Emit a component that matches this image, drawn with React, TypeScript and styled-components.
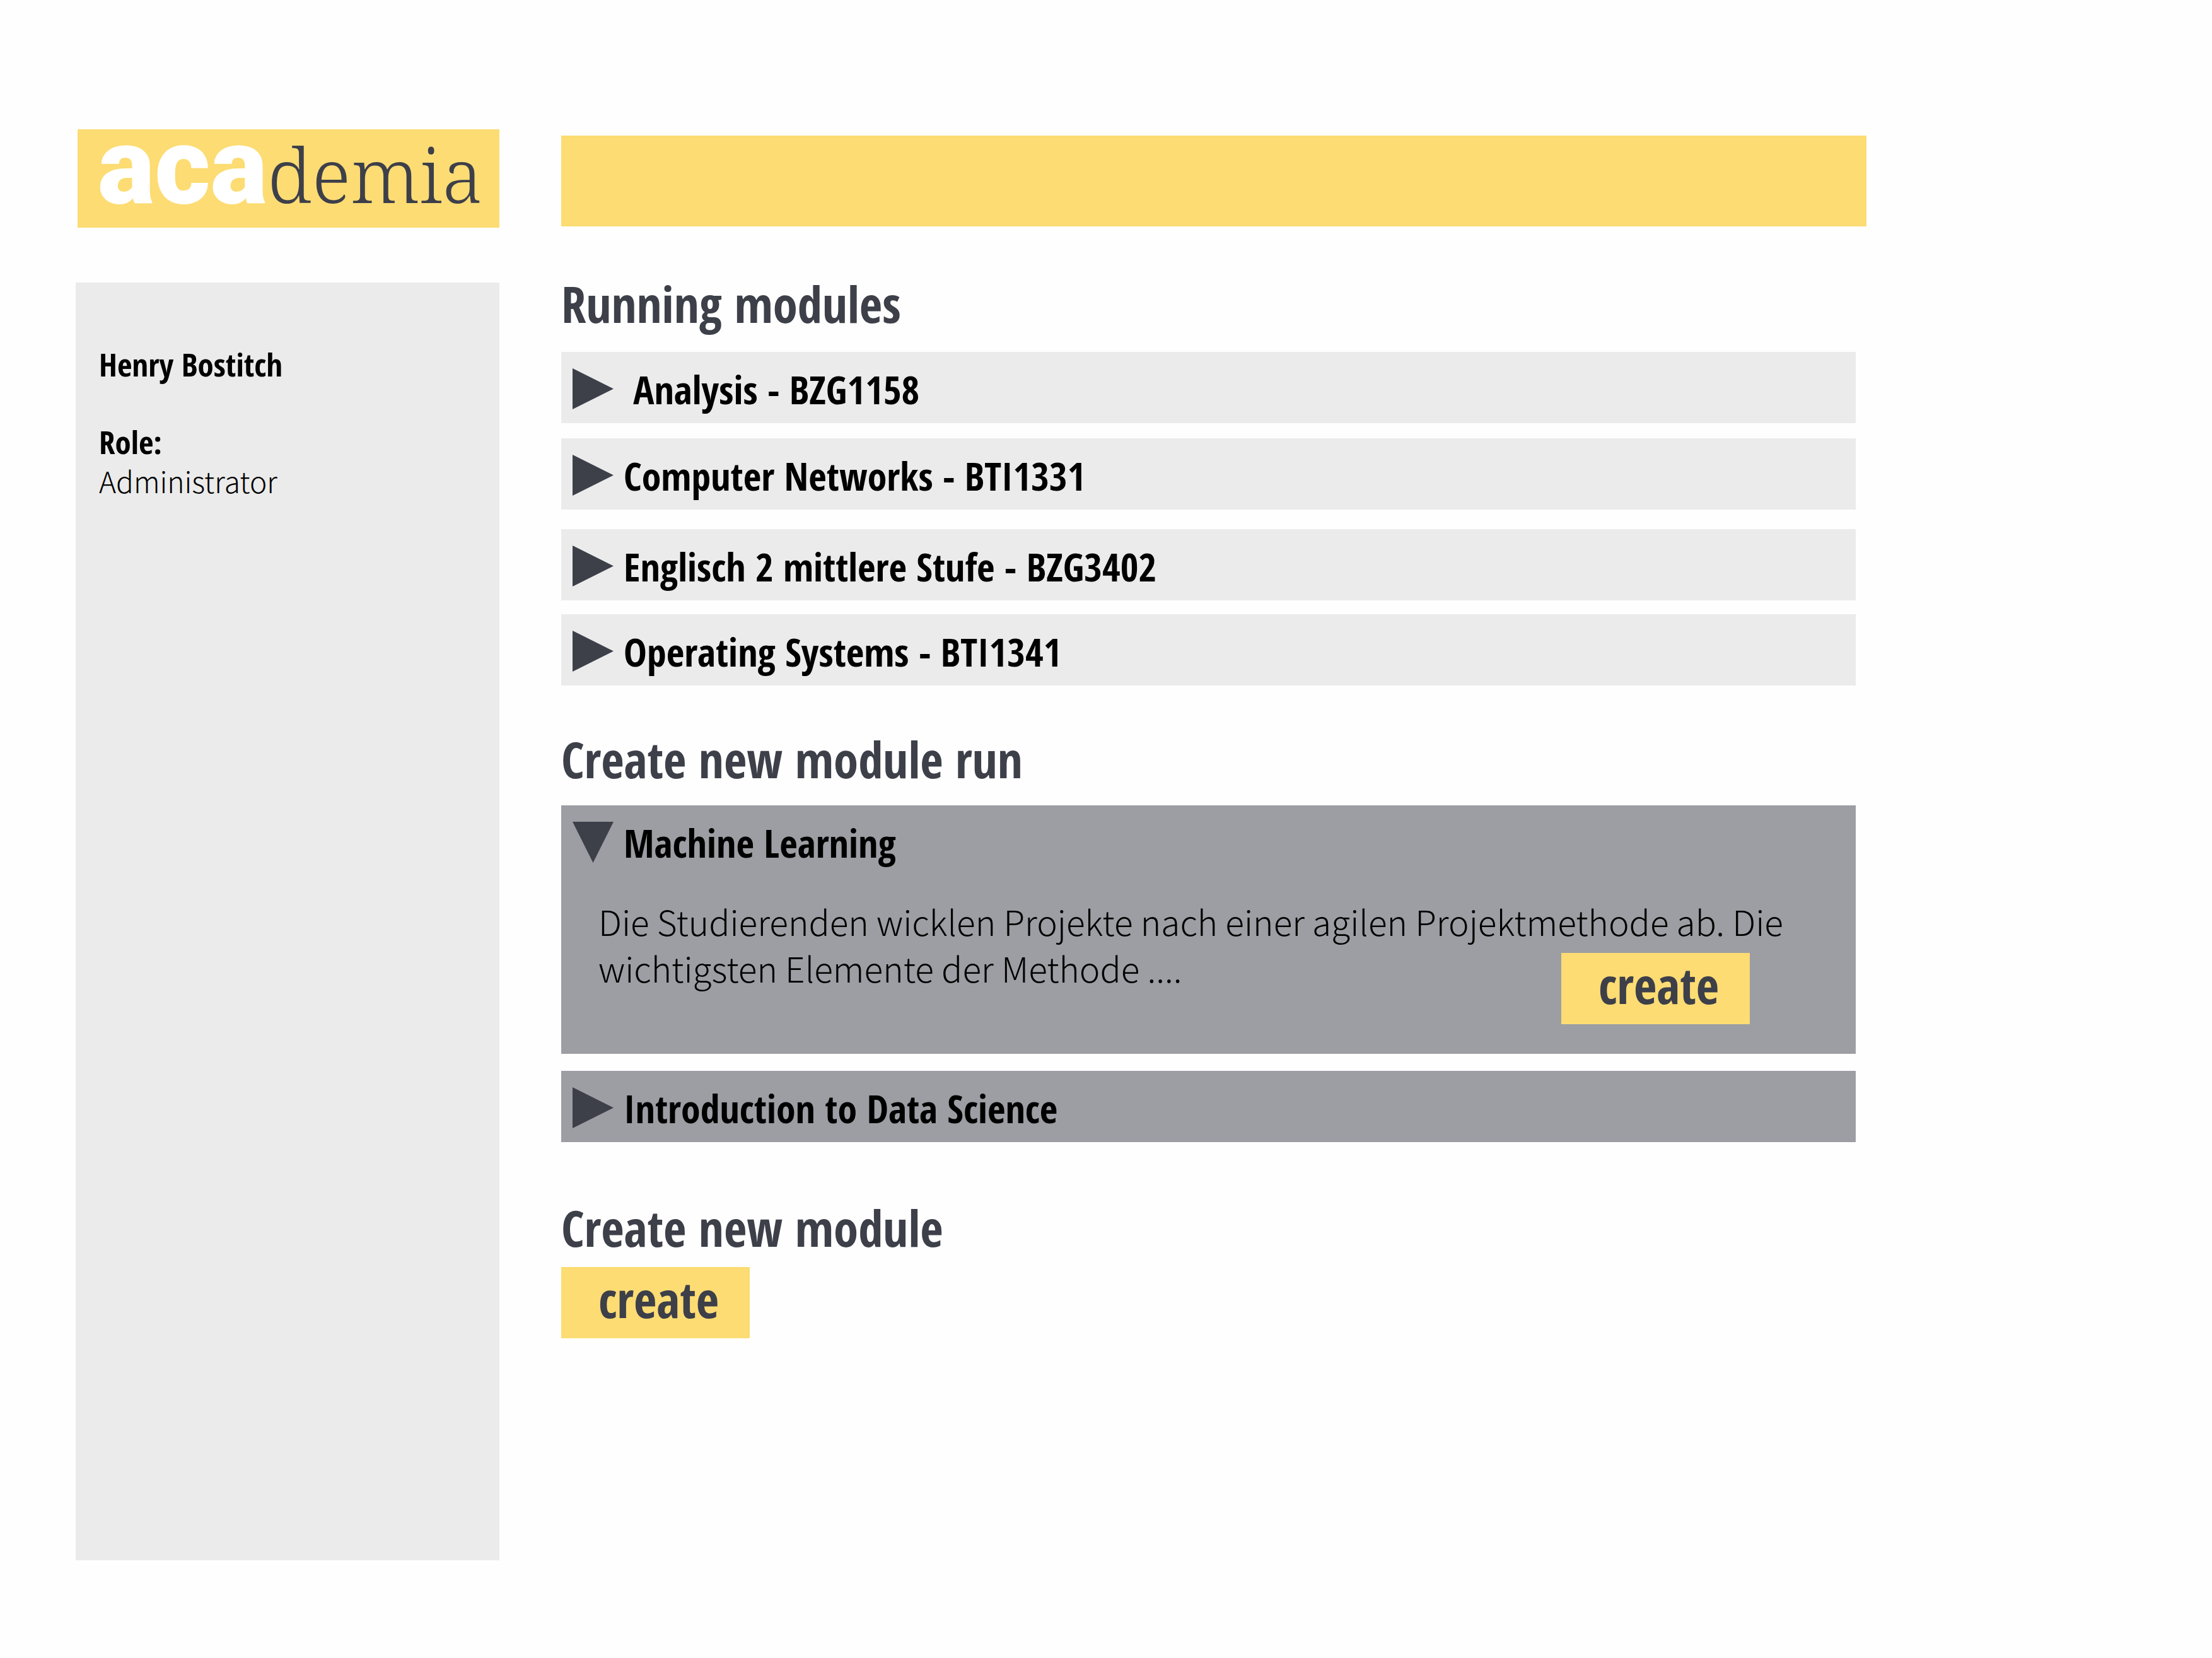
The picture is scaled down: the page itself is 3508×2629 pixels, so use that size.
import React, { useState } from "react";
import styled, { createGlobalStyle } from "styled-components";

const color = {
  yellow: "#fcdc73",
  ink: "#3d3f49",
  light: "#ebebeb",
  dark: "#9d9ea3",
};

const condensed = `"Open Sans Condensed", "Open Sans", sans-serif`;
const thin = `"Noto Sans CJK JP", "Open Sans", sans-serif`;

const GlobalStyle = createGlobalStyle`
  *, *::before, *::after { box-sizing: border-box; }
  body { margin: 0; background: #fefefe; color: #000; font-family: ${condensed}; }
  h1, h2, p, ul, dl, dt, dd { margin: 0; padding: 0; }
  button { border: 0; border-radius: 0; margin: 0; color: inherit; cursor: pointer; }
`;

const Page = styled.div`
  display: grid;
  grid-template-columns: 672px minmax(0, 1fr);
  grid-template-rows: auto 1fr;
  column-gap: 98px;
  row-gap: 87px;
  max-width: 2960px;
  min-height: 100vh;
  padding: 205px 0 155px 120px;
`;

const Logo = styled.h1`
  display: flex;
  align-items: baseline;
  height: 156px;
  margin-left: 3px;
  padding-left: 32px;
  background: ${color.yellow};
  line-height: 118px;
  white-space: nowrap;
`;

const LogoStrong = styled.span`
  color: #fff;
  font-family: Roboto, sans-serif;
  font-size: 170px;
  font-weight: 900;
`;

const LogoLight = styled.span`
  color: ${color.ink};
  font-family: "Noto Serif", "DejaVu Serif", serif;
  font-size: 119px;
  font-weight: 300;
`;

const TopBar = styled.header`
  margin: 10px 0 2px;
  background: ${color.yellow};
`;

const Sidebar = styled.aside`
  padding: 98px 37px;
  background: ${color.light};
  font-size: 51px;
  line-height: 62px;
`;

const UserName = styled.p`
  margin-bottom: 61px;
  font-weight: 700;
`;

const RoleLabel = styled.dt`
  font-weight: 700;
`;

const RoleValue = styled.dd`
  font-family: ${thin};
  font-size: 46px;
  font-weight: 300;
`;

const Main = styled.main`
  padding-right: 17px;
`;

const Section = styled.section<{ $before?: number }>`
  margin-top: ${(p) => p.$before ?? 0}px;
`;

const Heading = styled.h2<{ $after: number }>`
  margin-bottom: ${(p) => p.$after}px;
  color: ${color.ink};
  font-size: 79px;
  font-weight: 700;
  line-height: 68px;
`;

const ModuleList = styled.ul`
  list-style: none;
`;

const ModuleItem = styled.li<{ $tone: "light" | "dark"; $before: number }>`
  margin-top: ${(p) => p.$before}px;
  background: ${(p) => color[p.$tone]};
`;

const ModuleToggle = styled.button`
  display: flex;
  align-items: center;
  gap: 16px;
  width: 100%;
  height: 113px;
  padding: 4px 18px 0;
  background: none;
  font-family: ${condensed};
  font-size: 62px;
  font-weight: 700;
  text-align: left;
  white-space: pre;
`;

const Arrow = styled.svg`
  flex: none;
  width: 65px;
  height: 65px;
  fill: ${color.ink};
`;

const ModuleBody = styled.div`
  display: flex;
  flex-direction: column;
  padding: 33px 59px 47px;
`;

const Description = styled.p`
  font-family: ${thin};
  font-size: 55px;
  font-weight: 300;
  line-height: 74px;
`;

const CreateButton = styled.button`
  width: 299px;
  height: 113px;
  padding: 0 0 11px 59px;
  background: ${color.yellow};
  && { color: ${color.ink}; }
  font-family: ${condensed};
  font-size: 79px;
  font-weight: 700;
  line-height: 100px;
  text-align: left;
`;

const BodyAction = styled.div`
  align-self: flex-end;
  margin: -60px 109px 0 0;
  line-height: 0;
`;

type ModuleInfo = { title: string; before: number; text?: string };

const running: ModuleInfo[] = [
  { title: " Analysis - BZG1158", before: 0 },
  { title: "Computer Networks - BTI1331", before: 24 },
  { title: "Englisch 2 mittlere Stufe - BZG3402", before: 31 },
  { title: "Operating Systems - BTI1341", before: 22 },
];

const available: ModuleInfo[] = [
  {
    title: "Machine Learning",
    before: 0,
    text: "Die Studierenden wicklen Projekte nach einer agilen Projektmethode ab. Die wichtigsten Elemente der Methode ....",
  },
  { title: "Introduction to Data Science", before: 27 },
];

function Module({ info, tone }: { info: ModuleInfo; tone: "light" | "dark" }) {
  const [open, setOpen] = useState(Boolean(info.text));
  return (
    <ModuleItem $tone={tone} $before={info.before}>
      <ModuleToggle type="button" aria-expanded={open} onClick={() => setOpen(!open)}>
        <Arrow viewBox="0 0 65 65" aria-hidden="true">
          <path d={open ? "M0 0H65L32.500 65Z" : "M0 0L65 32.500L0 65Z"} />
        </Arrow>
        <span>{info.title}</span>
      </ModuleToggle>
      {open && info.text && (
        <ModuleBody>
          <Description lang="de">{info.text}</Description>
          <BodyAction>
            <CreateButton type="button">create</CreateButton>
          </BodyAction>
        </ModuleBody>
      )}
    </ModuleItem>
  );
}

export default function App() {
  return (
    <>
      <GlobalStyle />
      <Page>
        <Logo>
          <LogoStrong>aca</LogoStrong>
          <LogoLight>demia</LogoLight>
        </Logo>
        <TopBar />
        <Sidebar>
          <UserName>Henry Bostitch</UserName>
          <dl>
            <RoleLabel>Role:</RoleLabel>
            <RoleValue>Administrator</RoleValue>
          </dl>
        </Sidebar>
        <Main>
          <Section>
            <Heading $after={42}>Running modules</Heading>
            <ModuleList>
              {running.map((m) => (
                <Module key={m.title} info={m} tone="light" />
              ))}
            </ModuleList>
          </Section>
          <Section $before={83}>
            <Heading $after={39}>Create new module run</Heading>
            <ModuleList>
              {available.map((m) => (
                <Module key={m.title} info={m} tone="dark" />
              ))}
            </ModuleList>
          </Section>
          <Section $before={102}>
            <Heading $after={28}>Create new module</Heading>
            <CreateButton type="button">create</CreateButton>
          </Section>
        </Main>
      </Page>
    </>
  );
}
